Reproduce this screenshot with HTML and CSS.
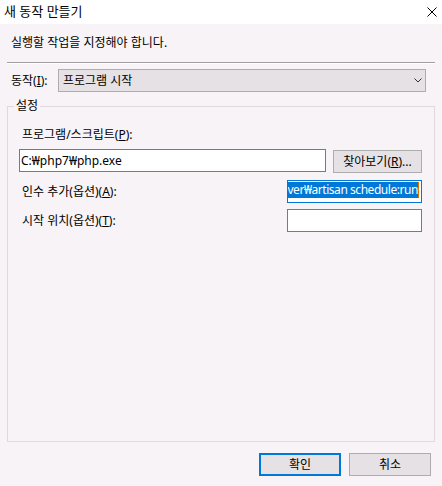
FILE: index.html
```html
<!doctype html>
<html lang="ko">
 <head>
  <meta charset="UTF-8">
  <meta name="viewport" content="width=device-width, initial-scale=1.0">
  <title>새 동작 만들기</title>
  <link rel="stylesheet" href="styles.css">
 </head>
 <body>
  <div class="window">
   <div class="titlebar">
    <span class="title">새 동작 만들기</span>
    <svg class="close" width="10" height="10" viewBox="0 0 10 10">
     <path d="M0.5 0.5 L9.5 9.5 M9.5 0.5 L0.5 9.5" stroke="#000" stroke-width="1" fill="none"/>
    </svg>
   </div>

   <div class="content">
    <p class="intro">실행할 작업을 지정해야 합니다.</p>
    <div class="sep"></div>

    <div class="action-row">
     <span class="action-label">동작(<u>I</u>):</span>
     <div class="combo">
      <span>프로그램 시작</span>
      <svg width="8" height="5" viewBox="0 0 8 5">
       <path d="M0.5 0.5 L4 4 L7.5 0.5" stroke="#333" stroke-width="1" fill="none"/>
      </svg>
     </div>
    </div>

    <!-- 설정 그룹 -->
    <fieldset class="group">
     <legend>설정</legend>
     <div class="group-body">
      <div class="label">프로그램/스크립트(<u>P</u>):</div>
      <div class="program-row">
       <div class="field program">C:₩php7₩php.exe</div>
       <button class="btn browse">찾아보기(<u>R</u>)...</button>
      </div>
      <div class="opt-row">
       <span class="label">인수 추가(옵션)(<u>A</u>):</span>
       <div class="field short focus"><span class="sel">ver₩artisan schedule:run</span><span class="caret"></span></div>
      </div>
      <div class="opt-row start">
       <span class="label">시작 위치(옵션)(<u>T</u>):</span>
       <div class="field short"></div>
      </div>
     </div>
    </fieldset>

    <div class="buttons">
     <button class="btn ok">확인</button>
     <button class="btn">취소</button>
    </div>
   </div>
  </div>
 </body>
</html>
```

FILE: styles.css
```css
body {
    margin: 0;
    font-family: "Noto Sans", "Noto Sans CJK KR", sans-serif;
    font-size: 12px;
    line-height: 16px;
    color: #000;
}
.window {
    width: 442px;
    height: 486px;
    display: flex;
    flex-direction: column;
    background: #f7f3f7;
}
.titlebar {
    height: 24px;
    flex: none;
    background: #fff;
    display: flex;
    justify-content: space-between;
    align-items: flex-start;
    padding: 3px 5px 0 4px;
    box-sizing: border-box;
}
.title {
    font-size: 13px;
}
.close {
    margin-top: 4px;
}
.content {
    flex: 1;
    display: flex;
    flex-direction: column;
    padding: 0 7px 10px 7px;
    min-height: 0;
}
.intro {
    margin: 11px 4px 0;
}
.sep {
    height: 1px;
    background: #a0a0a0;
    border-bottom: 1px solid #fff;
    margin-top: 11px;
}
.action-row {
    display: flex;
    align-items: center;
    margin-top: 5px;
}
.action-label {
    flex: none;
    width: 47px;
    margin-left: 4px;
}
.combo {
    width: 368px;
    height: 23px;
    box-sizing: border-box;
    border: 1px solid #adadad;
    background: #e5e1e5;
    display: flex;
    align-items: center;
    justify-content: space-between;
    padding: 0 3px 0 4px;
}
.group {
    flex: 1;
    margin: 6px 0 0;
    padding: 0;
    border: 1px solid #dedade;
    min-width: 0;
}
.group legend {
    margin-left: 6px;
    padding: 0 2px;
    line-height: 16px;
}
.group-body {
    padding: 13px 12px 0 11px;
}
.label {
    margin-left: 3px;
}
.group-body > .label {
    margin-bottom: 6px;
}
.field {
    height: 23px;
    box-sizing: border-box;
    border: 1px solid #7a7a7a;
    background: #fff;
    padding: 0 1px;
    display: flex;
    align-items: center;
    white-space: nowrap;
    overflow: hidden;
}
.program-row {
    display: flex;
    align-items: flex-start;
    gap: 7px;
    height: 24px;
}
.program {
    width: 307px;
}
.opt-row {
    display: flex;
    justify-content: space-between;
    align-items: center;
    margin-top: 7px;
}
.opt-row.start {
    margin-top: 6px;
}
.short {
    width: 135px;
}
.focus {
    border-color: #0078d7;
    justify-content: flex-end;
    padding: 1px 2px 0 1px;
    align-items: flex-start;
}
.sel {
    background: #0078d7;
    color: #fff;
    line-height: 16px;
    letter-spacing: -0.45px;
}
.caret {
    width: 1px;
    height: 16px;
    background: #e07000;
    flex: none;
}
.btn {
    font: inherit;
    color: #000;
    height: 23px;
    box-sizing: border-box;
    border: 1px solid #adadad;
    background: #e5e1e5;
    padding: 0;
    margin: 0;
}
.browse {
    width: 89px;
    margin-top: 1px;
}
.buttons {
    display: flex;
    justify-content: flex-end;
    gap: 8px;
    margin-top: 11px;
    padding-right: 4px;
}
.buttons .btn {
    width: 82px;
}
.btn.ok {
    border: 2px solid #0078d7;
}
```
